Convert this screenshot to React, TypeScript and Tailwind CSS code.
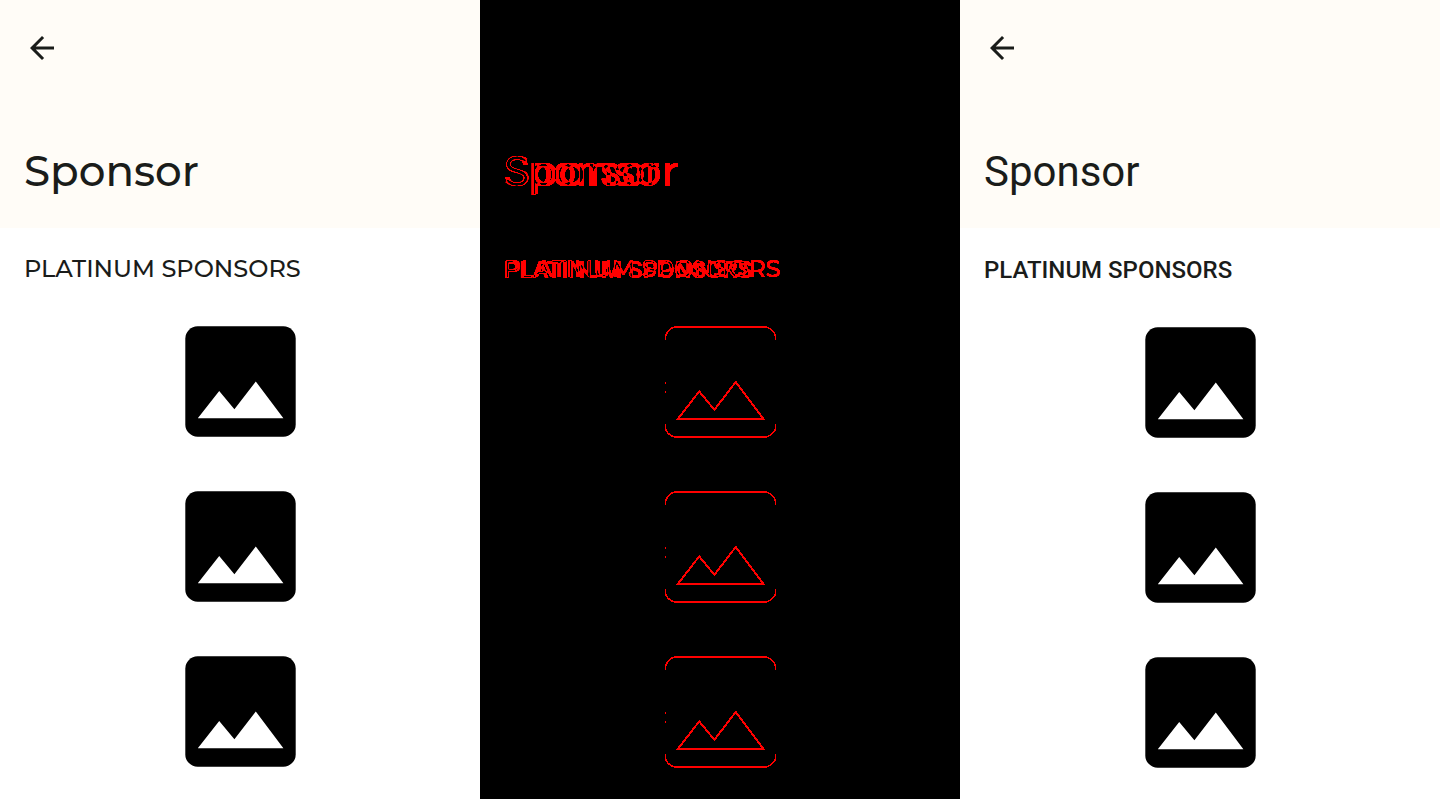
const SPONSORS = ['Platinum sponsor 1', 'Platinum sponsor 2', 'Platinum sponsor 3'];

function BackArrow() {
  return (
    <svg viewBox="0 0 24 24" className="h-9 w-9" fill="currentColor" aria-hidden="true">
      <path d="M20 11H7.83l5.59-5.59L12 4l-8 8 8 8 1.41-1.41L7.83 13H20v-2z" />
    </svg>
  );
}

function SponsorImage({ label }: { label: string }) {
  return (
    <svg viewBox="0 0 112 112" className="h-28 w-28" role="img" aria-label={label}>
      <rect x="1.3" y="0.3" width="110.4" height="110.4" rx="12.3" fill="#000" />
      <path d="M13.8 92.2 35.2 64.9l15.2 18.4 21.4-27.9 27.6 36.8z" fill="#fff" />
    </svg>
  );
}

function SponsorOutline({ label }: { label: string }) {
  return (
    <svg
      viewBox="0 0 112 112"
      className="h-28 w-28"
      role="img"
      aria-label={label}
      fill="none"
      stroke="#f00"
      shapeRendering="crispEdges"
    >
      <path d="M10 1h93M10 111h93" strokeWidth="2" />
      <path
        d="M1.5 14v-3c0-3 4-9 9-10M102 1c5 1 9.5 6 9.5 10v3M1.5 98v4c0 3 4 8 9 9M102 111c5-1 9.5-6 9.5-9v-4"
        strokeWidth="1.5"
      />
      <path d="M1.5 56v2M1.5 65v2" strokeWidth="1" />
      <path d="M13.8 93 35.2 65.4l15.2 18.4 21.4-27.9 27.8 37.1z" strokeWidth="2" />
    </svg>
  );
}

type Variant = 'wide' | 'standard';

function Screen({ variant }: { variant: Variant }) {
  const wide = variant === 'wide';
  return (
    <section className="bg-white text-[#1a1c1a]">
      <header className="h-[228px] bg-[#fffcf7] px-6 pt-6">
        <button type="button" aria-label="Back" className="flex h-12 w-9 items-center justify-center">
          <BackArrow />
        </button>
        <h1
          className={
            wide
              ? "mt-[71px] font-['Montserrat',sans-serif] text-[42px] leading-[56px] font-medium"
              : "mt-[72px] font-['Roboto',sans-serif] text-[42px] leading-[56px]"
          }
        >
          Sponsor
        </h1>
      </header>
      <h2
        className={
          wide
            ? "mt-[25px] px-6 font-['Montserrat',sans-serif] text-2xl leading-8 font-medium whitespace-nowrap"
            : "mt-[26px] px-6 font-['Roboto',sans-serif] text-2xl leading-8 font-medium whitespace-nowrap"
        }
      >
        PLATINUM SPONSORS
      </h2>
      <ul className="mt-[41px] flex flex-col items-center gap-[53px]">
        {SPONSORS.map((s) => (
          <li key={s}>
            <SponsorImage label={s} />
          </li>
        ))}
      </ul>
    </section>
  );
}

function Difference() {
  return (
    <section className="bg-black text-[#f00]">
      <div className="grid h-[228px] bg-black px-6 pt-[143px] text-[42px] leading-[56px] brightness-[6]">
        <p className="col-start-1 row-start-1 font-['Montserrat',sans-serif] font-medium mix-blend-difference">
          Sponsor
        </p>
        <p
          className="col-start-1 row-start-1 pt-px font-['Roboto',sans-serif] mix-blend-difference"
          aria-hidden="true"
        >
          Sponsor
        </p>
      </div>
      <div className="mt-[25px] grid h-8 bg-black px-6 text-2xl leading-8 whitespace-nowrap brightness-[6]">
        <p className="col-start-1 row-start-1 font-['Montserrat',sans-serif] font-medium mix-blend-difference">
          PLATINUM SPONSORS
        </p>
        <p
          className="col-start-1 row-start-1 pt-px font-['Roboto',sans-serif] font-medium mix-blend-difference"
          aria-hidden="true"
        >
          PLATINUM SPONSORS
        </p>
      </div>
      <ul className="mt-[41px] flex flex-col items-center gap-[53px]">
        {SPONSORS.map((s) => (
          <li key={s}>
            <SponsorOutline label={s} />
          </li>
        ))}
      </ul>
    </section>
  );
}

export default function App() {
  return (
    <main className="grid min-h-screen grid-cols-3">
      <Screen variant="wide" />
      <Difference />
      <Screen variant="standard" />
    </main>
  );
}
